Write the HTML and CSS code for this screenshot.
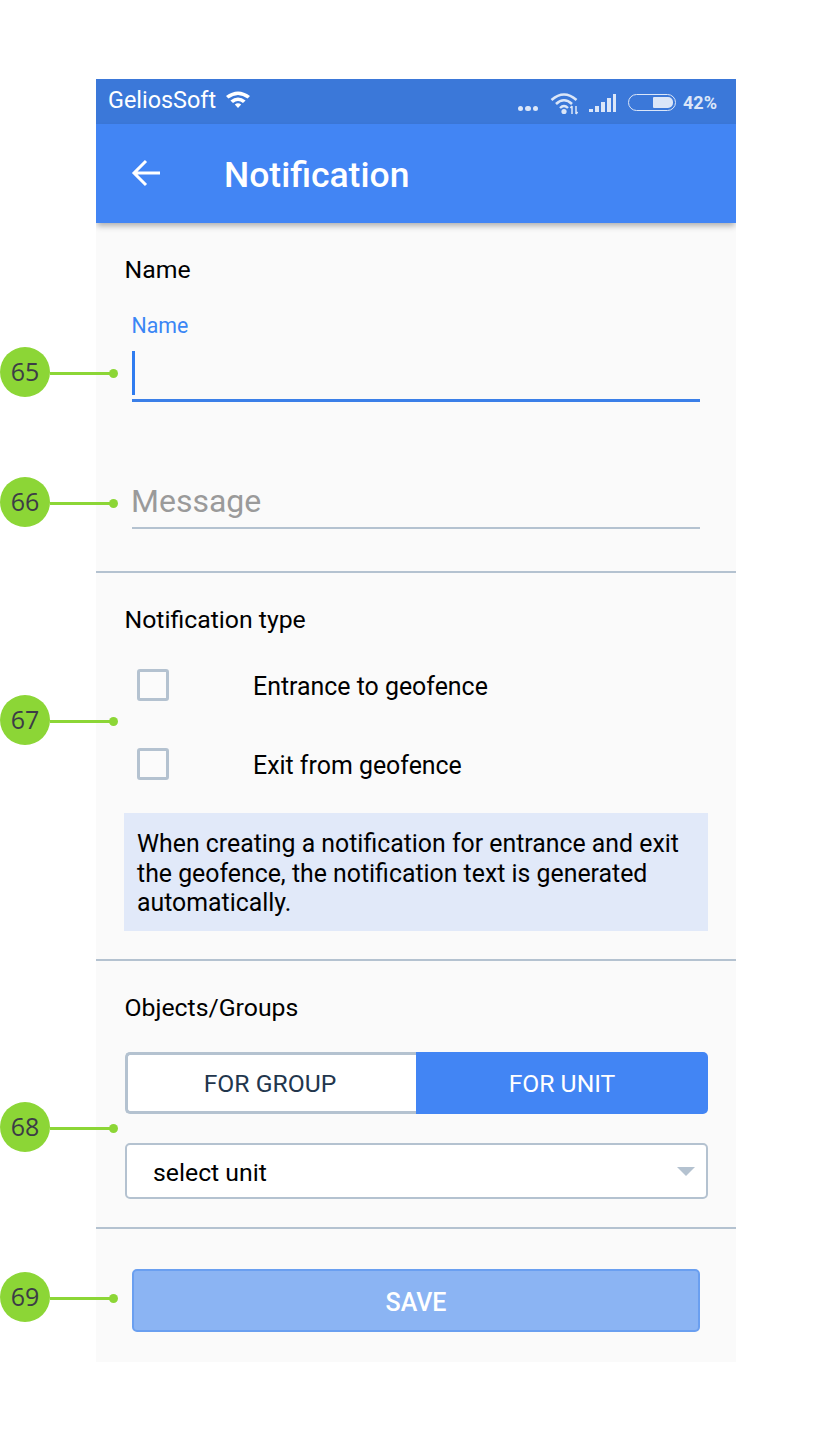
FILE: index.html
```html
<!DOCTYPE html>
<html lang="en">

<head>
    <meta charset="UTF-8">
    <meta name="viewport" content="width=device-width, initial-scale=1.0">
    <title>Notification</title>
    <link rel="stylesheet" href="styles.css">
</head>

<body>
    <div class="phone">
        <div class="statusBar">
            <span class="carrier">GeliosSoft</span>
            <svg class="wifiLeft" width="26" height="20" viewBox="0 0 26 20">
                <path d="M1 7 Q13 -2 25 7 L22.6 9.6 Q13 2.6 3.4 9.6 Z" fill="#fff" />
                <path d="M5.4 11.4 Q13 5.4 20.6 11.4 L18 14 Q13 10.2 8 14 Z" fill="#fff" />
                <path d="M9.8 15.6 Q13 13 16.2 15.6 L13 19 Z" fill="#fff" />
            </svg>
            <div class="statusRight">
                <span class="dots"><i></i><i></i><i></i></span>
                <svg class="wifiRight" width="30" height="24" viewBox="0 0 30 24" fill="none" stroke="#dbe6f8">
                    <path d="M1.5 9 Q14 -2 26.5 9" stroke-width="2.6" />
                    <path d="M6 13 Q14 5.5 22 13" stroke-width="2.6" />
                    <path d="M10 17 Q14 13 18 17" stroke-width="2.4" />
                    <circle cx="14" cy="20.5" r="2.6" fill="#dbe6f8" stroke="none" />
                    <path d="M22 23V15M20.4 17 22 15M26 15V23M27.6 21 26 23" stroke-width="1.5" />
                </svg>
                <svg class="signal" width="28" height="18" viewBox="0 0 28 18" fill="#dbe6f8">
                    <rect x="0" y="15" width="4" height="3" />
                    <rect x="6" y="12" width="4" height="6" />
                    <rect x="12" y="8" width="4" height="10" />
                    <rect x="18" y="4" width="4" height="14" />
                    <rect x="24" y="0" width="3" height="18" />
                </svg>
                <span class="battery"><i></i></span>
                <span class="percent">42%</span>
            </div>
        </div>

        <header class="appBar">
            <svg class="backIcon" width="30" height="28" viewBox="0 0 30 28" fill="none" stroke="#fff" stroke-width="3">
                <path d="M29 14H3M15 2 3 14 15 26" />
            </svg>
            <h1>Notification</h1>
        </header>

        <section class="nameSection">
            <h2 class="sectionTitle">Name</h2>
            <label class="floatLabel">Name</label>
            <div class="activeField"><span class="caret"></span></div>
            <div class="messageField">Message</div>
        </section>

        <section class="typeSection">
            <h2 class="sectionTitle">Notification type</h2>
            <div class="checkRow"><span class="checkBox"></span><span class="checkLabel">Entrance to geofence</span></div>
            <div class="checkRow"><span class="checkBox"></span><span class="checkLabel">Exit from geofence</span></div>
            <p class="infoBox">When creating a notification for entrance and exit the geofence, the notification text is generated automatically.</p>
        </section>

        <section class="objectsSection">
            <h2 class="sectionTitle">Objects/Groups</h2>
            <div class="toggle">
                <div class="toggleOff">FOR GROUP</div>
                <div class="toggleOn">FOR UNIT</div>
            </div>
            <div class="selectBox">
                <span class="selectText">select unit</span>
                <span class="selectArrow"></span>
            </div>
        </section>

        <section class="saveSection">
            <button type="button" class="saveButton">SAVE</button>
        </section>
    </div>

    <div class="callout c65"><span class="num">65</span><span class="line"></span><span class="dot"></span></div>
    <div class="callout c66"><span class="num">66</span><span class="line"></span><span class="dot"></span></div>
    <div class="callout c67"><span class="num">67</span><span class="line"></span><span class="dot"></span></div>
    <div class="callout c68"><span class="num">68</span><span class="line"></span><span class="dot"></span></div>
    <div class="callout c69"><span class="num">69</span><span class="line"></span><span class="dot"></span></div>
</body>

</html>
```

FILE: styles.css
```css
* {
    box-sizing: border-box;
}

body {
    margin: 0;
    height: 1439px;
    background: #fff;
    font-family: Roboto, "Liberation Sans", sans-serif;
    color: #000;
    position: relative;
    overflow: hidden;
}

.phone {
    width: 640px;
    margin: 79px 0 0 96px;
    background: #fafafa;
    overflow: hidden;
}

.statusBar {
    height: 45px;
    background: #3b78d9;
    color: #fff;
    display: flex;
    align-items: center;
    padding: 0 19px 0 12px;
}

.carrier {
    font-size: 23.4px;
    margin-top: -3px;
}

.wifiLeft {
    margin: -6px 0 0 9px;
}

.statusRight {
    margin-left: auto;
    display: flex;
    align-items: center;
    color: #dbe6f8;
    padding-top: 2px;
}

.dots {
    display: flex;
    gap: 2px;
    margin: 12px 12px 0 0;
}

.dots i {
    width: 5.5px;
    height: 5.5px;
    border-radius: 50%;
    background: #dbe6f8;
}

.wifiRight {
    margin-right: 9px;
}

.signal {
    margin-right: 11px;
}

.battery {
    width: 48px;
    height: 17px;
    border: 1.5px solid #dbe6f8;
    border-radius: 9px;
    margin-right: 7px;
    display: flex;
    justify-content: flex-end;
    padding: 2px;
}

.battery i {
    width: 20px;
    background: #dbe6f8;
    border-radius: 1px 5px 5px 1px;
}

.percent {
    font-size: 18px;
    font-weight: 700;
}

.appBar {
    height: 99px;
    background: #4285f4;
    color: #fff;
    display: flex;
    align-items: center;
    padding-left: 35px;
    box-shadow: 0 4px 6px -1px rgba(0, 0, 0, .3);
    position: relative;
}

.appBar h1 {
    margin: 3px 0 0 63px;
    font-size: 35.5px;
    font-weight: 500;
}

.backIcon {
    margin-top: -2px;
}

section {
    border-bottom: 2px solid #b4c2d0;
    padding: 0 28px;
}

.sectionTitle {
    margin: 0;
    padding-left: .5px;
    font-size: 24.8px;
    font-weight: 400;
    line-height: 28px;
}

.nameSection {
    height: 350px;
    padding-top: 33px;
}

.floatLabel {
    display: block;
    margin: 30px 0 0 7.5px;
    font-size: 21.3px;
    line-height: 24px;
    color: #3a86f5;
}

.activeField {
    margin: 13px 8px 0;
    height: 51px;
    border-bottom: 3px solid #3a7fe8;
}

.caret {
    display: block;
    width: 3px;
    height: 44px;
    background: #2f7cf0;
}

.messageField {
    margin: 83px 8px 0;
    height: 44px;
    border-bottom: 2px solid #b4c2d0;
    font-size: 32px;
    line-height: 32px;
    color: #9a9a9a;
    text-indent: -1px;
}

.typeSection {
    height: 388px;
    padding-top: 33px;
}

.checkRow {
    display: flex;
    align-items: center;
    height: 32px;
    margin-top: 47px;
    padding-left: 13px;
    font-size: 24.9px;
}

.typeSection .sectionTitle + .checkRow {
    margin-top: 35px;
}

.checkLabel {
    margin-top: 3px;
}

.checkBox {
    width: 32px;
    height: 32px;
    border: 3px solid #b4c2d0;
    border-radius: 3px;
    margin-right: 84px;
    background: #fbfbfb;
}

.infoBox {
    margin: 33px 0 0;
    height: 118px;
    padding: 16px 13px 0;
    background: #e1e9f9;
    font-size: 24.85px;
    line-height: 29.5px;
}

.objectsSection {
    height: 268px;
    padding-top: 33px;
}

.toggle {
    display: flex;
    height: 62px;
    margin: 30px 0 0 1px;
    font-size: 24.7px;
}

.toggleOff,
.toggleOn {
    display: flex;
    align-items: center;
    justify-content: center;
}

.toggleOff {
    flex: none;
    width: 291px;
    padding-right: 4px;
    background: #fff;
    color: #22364d;
    border: 3px solid #b4c2d0;
    border-right: 0;
    border-radius: 5px 0 0 5px;
}

.toggleOn {
    flex: 1;
    background: #4285f4;
    color: #fff;
    border-radius: 0 5px 5px 0;
}

.selectBox {
    height: 56px;
    margin: 29px 0 0 1px;
    padding: 0 11px 0 26px;
    background: #fff;
    border: 2px solid #b4c2d0;
    border-radius: 5px;
    display: flex;
    align-items: center;
    justify-content: space-between;
    font-size: 24.8px;
}

.selectText {
    margin-top: 2px;
}

.selectArrow {
    width: 0;
    height: 0;
    border-left: 9px solid transparent;
    border-right: 9px solid transparent;
    border-top: 9px solid #b4c2d0;
}

.saveSection {
    border-bottom: 0;
    height: 133px;
    padding: 40px 36px 0;
}

.saveButton {
    display: block;
    width: 100%;
    height: 63px;
    padding-top: 4px;
    background: #8bb4f3;
    border: 2px solid #6a9ff0;
    border-radius: 5px;
    color: #fff;
    font-family: Roboto, "Liberation Sans", sans-serif;
    font-size: 25px;
    font-weight: 500;
}

.callout {
    position: absolute;
    left: 0;
    display: flex;
    align-items: center;
    height: 50px;
}

.num {
    width: 50px;
    height: 50px;
    border-radius: 50%;
    background: #8cd636;
    color: #3c3c46;
    font-family: "Open Sans", sans-serif;
    font-size: 25px;
    line-height: 48px;
    text-align: center;
}

.line {
    width: 60px;
    height: 3px;
    margin-top: 2px;
    background: #8cd636;
}

.dot {
    width: 9px;
    height: 9px;
    border-radius: 50%;
    background: #8cd636;
    margin: 2px 0 0 -1px;
}

.c65 { top: 347px; }
.c66 { top: 477px; }
.c67 { top: 695px; }
.c68 { top: 1102px; }
.c69 { top: 1272px; }
```
